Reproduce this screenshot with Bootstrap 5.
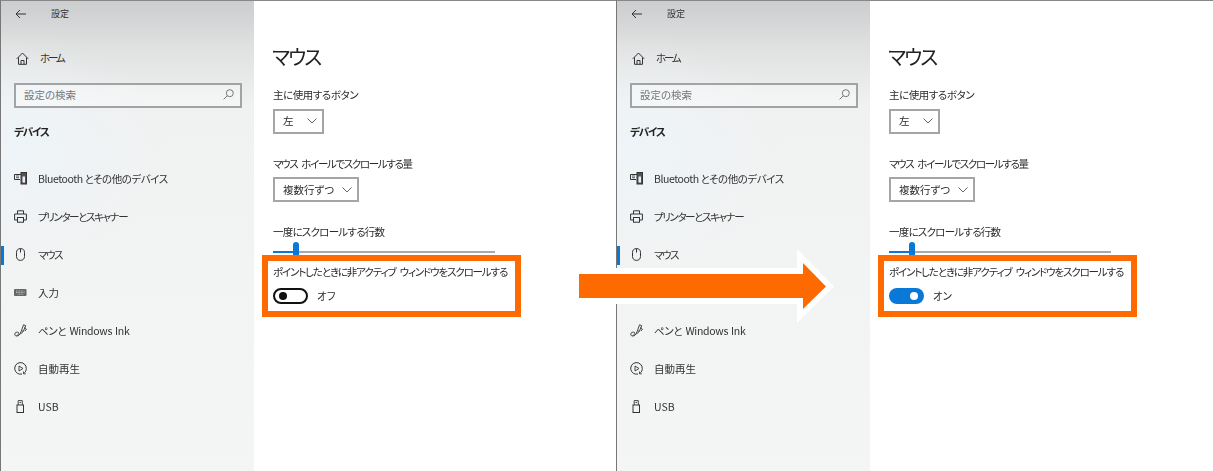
<!DOCTYPE html>
<html lang="ja">
<head>
<meta charset="utf-8">
<title>マウス設定</title>
<link href="https://cdn.jsdelivr.net/npm/bootstrap@5.3.0/dist/css/bootstrap.min.css" rel="stylesheet">
<style>
html,body{width:1213px;height:471px;margin:0;overflow:hidden;background:#fff}
body{font-family:"Noto Sans CJK JP","Noto Sans",sans-serif;font-size:10.5px;color:#333;position:relative;font-feature-settings:"palt"}
.stage{width:1213px;height:471px;filter:blur(.35px)}
.pane{width:616px;height:471px;border-left:1px solid #777;border-top:1px solid #888}
.pane + .pane{width:597px}
.side{width:253px;height:470px;background:radial-gradient(ellipse 170px 120px at 0 150px,#eef4f8 0,rgba(238,244,248,0) 100%),linear-gradient(180deg,#cbcdce 0,#dfe0e0 45px,#f0f1f1 105px,#f4f5f5 100%);flex:none}
.s-top{height:26px;padding-left:14px;gap:24px;font-size:9px}
.s-home{height:40px;margin-top:11px;padding-left:15px;gap:11px;font-size:10.5px}
.s-search{width:228px;height:25px;margin:5px 0 0 13px;border:2px solid #a2a3a4;padding:0 6px 2px 8px;color:#777;font-size:10.5px;background:rgba(255,255,255,.35)}
.s-head{font-weight:700;font-size:10.5px;color:#222;margin:15.5px 0 0 13px;height:36px;line-height:15px;letter-spacing:-1.1px}
.s-row{height:38px;padding-left:13px;gap:12px;font-size:10.5px;position:relative}
.s-row > span{margin-left:-1px}
.s-row svg,.s-home svg{flex:none}
.s-row.on::before{content:"";position:absolute;left:0;top:10px;width:3px;height:19px;background:#0a78d7}
.tight-a{letter-spacing:-.45px}
.tight-pen{letter-spacing:-.3px;word-spacing:1px}
.tight-b{letter-spacing:-.45px}
.tight-c{letter-spacing:-.75px}
.tight-d{letter-spacing:-1.15px;word-spacing:3px}
.tight-g{letter-spacing:-1.35px;word-spacing:3px}
.tight-e{letter-spacing:-1.4px}
.tight-f{letter-spacing:-2.2px}
.main{padding:40px 0 0 19px;color:#2b2b2b;width:262px}
.m-title{font-size:20px;line-height:32px;font-weight:400;margin:0 0 15px -1px;color:#222;letter-spacing:-1.8px}
.m-label{font-size:10.5px;line-height:13px;white-space:nowrap}
.m-select{height:25px;border:2px solid #a5a5a5;margin:7.5px 0 23px;padding:0 5px 0 8px;gap:8px;font-size:10.5px;width:fit-content}
.m-select.wide-gap{gap:13px}
.track{width:222px;height:2px;background:#a9a9a9;margin-top:12.5px;position:relative}
.track::before{content:"";position:absolute;left:0;top:0;width:22px;height:2px;background:#0a78d7}
.thumb{position:absolute;left:20px;top:-9px;width:6px;height:19px;border-radius:3px;background:#0a78d7}
.m-label.inact{margin-top:12.5px}
.tog-row{margin-top:9.5px;gap:9px;font-size:10.5px;height:16px}
.tog{width:35px;height:16px;border-radius:8px;position:relative;flex:none}
.tog-off{border:2px solid #111;background:#fff}
.tog-off::after{content:"";position:absolute;left:4px;top:2px;width:8px;height:8px;border-radius:50%;background:#111}
.tog-on{background:#0a78d7}
.tog-on::after{content:"";position:absolute;right:6px;top:4px;width:8px;height:8px;border-radius:50%;background:#fff}
.hl{position:absolute;top:255px;width:259px;height:62px;border:6px solid #ff6a00}
.hl-a{left:262px}
.hl-b{left:878px}
.arrow{position:absolute;left:579px;top:249px}
</style>
</head>
<body>
<div class="stage d-flex">
  <section class="pane d-flex">
    <aside class="side">
      <div class="s-top d-flex align-items-center"><svg width="12" height="10" viewBox="0 0 12 10" fill="none" stroke="#333"><path d="M11 5H1M5 1 1 5l4 4"/></svg><span>設定</span></div>
      <div class="s-home d-flex align-items-center"><svg width="13" height="13" viewBox="0 0 13 13" fill="none" stroke="#333"><path d="M.8 6.800 6.500 1l5.700 5.800M2.500 5.500v6.800h8V5.500M5 12.300V8.500h3v3.800"/></svg><span class="tight-f">ホーム</span></div>
      <div class="s-search d-flex align-items-center justify-content-between"><span>設定の検索</span><svg width="11" height="11" viewBox="0 0 11 11" fill="none" stroke="#777"><circle cx="6.800" cy="4.200" r="3.500"/><path d="M4.200 6.800.6 10.400"/></svg></div>
      <div class="s-head">デバイス</div>
      <div class="s-row d-flex align-items-center"><svg width="13" height="13" viewBox="0 0 13 13" fill="none" stroke="#333"><path d="M7 2.500H.5v5H6"/><path d="M2 4h3M2 5.700h3" stroke-width=".8"/><rect x="7" y=".5" width="5.500" height="11.500" fill="#555"/><rect x="8.500" y="4.500" width="2.500" height="6" fill="#eee" stroke="none"/></svg><span class="tight-a">Bluetooth とその他のデバイス</span></div>
      <div class="s-row d-flex align-items-center"><svg width="13" height="13" viewBox="0 0 13 13" fill="none" stroke="#333"><path d="M3.500 4V.8h6V4M3 10H.6V4h11.800v6H10"/><rect x="3.500" y="7.500" width="6" height="4.700"/></svg><span class="tight-e">プリンターとスキャナー</span></div>
      <div class="s-row on d-flex align-items-center"><svg width="13" height="13" viewBox="0 0 13 13" fill="none" stroke="#333"><path d="M6.500.6c2.600 0 4 1.500 4 3.800v4c0 2.400-1.600 4-4 4s-4-1.600-4-4v-4C2.500 2.100 3.900.6 6.500.6zM6.500.6v4"/></svg><span class="tight-e">マウス</span></div>
      <div class="s-row d-flex align-items-center"><svg width="13" height="13" viewBox="0 0 13 13"><rect x="0" y="3" width="12.500" height="7" rx="1" fill="#666"/><path d="M2 5h8.500M2 6.500h8.500M3.500 8.200h6" stroke="#ddd" stroke-width=".7" stroke-dasharray="1 .6"/></svg><span>入力</span></div>
      <div class="s-row d-flex align-items-center"><svg width="13" height="13" viewBox="0 0 13 13" fill="none" stroke="#333" stroke-width=".9"><path d="M7.500 6.500 9.500.8l2.200.9L9.300 7.400M7.500 6.500l-1.300 3 .6.300L9.300 7.400z"/><path d="M10.500 3.500 12.400 5 11 7"/><path d="M6.200 9.500C5 12.500 1 13 .7 10.300.5 8.500 3.500 7.500 4.500 8.500c.8.900-.6 3-2 3"/></svg><span class="tight-pen">ペンと Windows Ink</span></div>
      <div class="s-row d-flex align-items-center"><svg width="13" height="13" viewBox="0 0 13 13" fill="none" stroke="#333"><path d="M8 12A5.800 5.800 0 1 1 12.300 6.500c0 1.800-.7 3.200-1.800 4.300"/><path d="M5 4v5l4-2.500zM9.500 9.500v2.300h2.300" stroke-width=".9"/></svg><span>自動再生</span></div>
      <div class="s-row d-flex align-items-center"><svg width="13" height="13" viewBox="0 0 13 13" fill="none" stroke="#333"><rect x="3" y="5" width="6.500" height="7.500"/><path d="M4.200 5V.6h4.100V5M5.500 2.500h1.500" stroke-width=".9"/></svg><span>USB</span></div>
    </aside>
    <main class="main">
      <h1 class="m-title">マウス</h1>
      <div class="m-label tight-b">主に使用するボタン</div>
      <div class="m-select wide-gap d-flex align-items-center"><span>左</span><svg width="10" height="6" viewBox="0 0 10 6" fill="none" stroke="#666"><path d="M.5.5 5 5 9.500.5"/></svg></div>
      <div class="m-label tight-g">マウス ホイールでスクロールする量</div>
      <div class="m-select d-flex align-items-center"><span>複数行ずつ</span><svg width="10" height="6" viewBox="0 0 10 6" fill="none" stroke="#666"><path d="M.5.5 5 5 9.500.5"/></svg></div>
      <div class="m-label tight-c">一度にスクロールする行数</div>
      <div class="track"><div class="thumb"></div></div>
      <div class="m-label inact tight-d">ポイントしたときに非アクティブ ウィンドウをスクロールする</div>
      <div class="tog-row d-flex align-items-center"><div class="tog tog-off"></div><span>オフ</span></div>
    </main>
  </section>
  <section class="pane d-flex">
    <aside class="side">
      <div class="s-top d-flex align-items-center"><svg width="12" height="10" viewBox="0 0 12 10" fill="none" stroke="#333"><path d="M11 5H1M5 1 1 5l4 4"/></svg><span>設定</span></div>
      <div class="s-home d-flex align-items-center"><svg width="13" height="13" viewBox="0 0 13 13" fill="none" stroke="#333"><path d="M.8 6.800 6.500 1l5.700 5.800M2.500 5.500v6.800h8V5.500M5 12.300V8.500h3v3.800"/></svg><span class="tight-f">ホーム</span></div>
      <div class="s-search d-flex align-items-center justify-content-between"><span>設定の検索</span><svg width="11" height="11" viewBox="0 0 11 11" fill="none" stroke="#777"><circle cx="6.800" cy="4.200" r="3.500"/><path d="M4.200 6.800.6 10.400"/></svg></div>
      <div class="s-head">デバイス</div>
      <div class="s-row d-flex align-items-center"><svg width="13" height="13" viewBox="0 0 13 13" fill="none" stroke="#333"><path d="M7 2.500H.5v5H6"/><path d="M2 4h3M2 5.700h3" stroke-width=".8"/><rect x="7" y=".5" width="5.500" height="11.500" fill="#555"/><rect x="8.500" y="4.500" width="2.500" height="6" fill="#eee" stroke="none"/></svg><span class="tight-a">Bluetooth とその他のデバイス</span></div>
      <div class="s-row d-flex align-items-center"><svg width="13" height="13" viewBox="0 0 13 13" fill="none" stroke="#333"><path d="M3.500 4V.8h6V4M3 10H.6V4h11.800v6H10"/><rect x="3.500" y="7.500" width="6" height="4.700"/></svg><span class="tight-e">プリンターとスキャナー</span></div>
      <div class="s-row on d-flex align-items-center"><svg width="13" height="13" viewBox="0 0 13 13" fill="none" stroke="#333"><path d="M6.500.6c2.600 0 4 1.500 4 3.800v4c0 2.400-1.600 4-4 4s-4-1.600-4-4v-4C2.500 2.100 3.900.6 6.500.6zM6.500.6v4"/></svg><span class="tight-e">マウス</span></div>
      <div class="s-row d-flex align-items-center"><svg width="13" height="13" viewBox="0 0 13 13"><rect x="0" y="3" width="12.500" height="7" rx="1" fill="#666"/><path d="M2 5h8.500M2 6.500h8.500M3.500 8.200h6" stroke="#ddd" stroke-width=".7" stroke-dasharray="1 .6"/></svg><span>入力</span></div>
      <div class="s-row d-flex align-items-center"><svg width="13" height="13" viewBox="0 0 13 13" fill="none" stroke="#333" stroke-width=".9"><path d="M7.500 6.500 9.500.8l2.200.9L9.300 7.400M7.500 6.500l-1.300 3 .6.300L9.300 7.400z"/><path d="M10.500 3.500 12.400 5 11 7"/><path d="M6.200 9.500C5 12.500 1 13 .7 10.300.5 8.500 3.500 7.500 4.500 8.500c.8.900-.6 3-2 3"/></svg><span class="tight-pen">ペンと Windows Ink</span></div>
      <div class="s-row d-flex align-items-center"><svg width="13" height="13" viewBox="0 0 13 13" fill="none" stroke="#333"><path d="M8 12A5.800 5.800 0 1 1 12.300 6.500c0 1.800-.7 3.200-1.800 4.300"/><path d="M5 4v5l4-2.500zM9.500 9.500v2.300h2.300" stroke-width=".9"/></svg><span>自動再生</span></div>
      <div class="s-row d-flex align-items-center"><svg width="13" height="13" viewBox="0 0 13 13" fill="none" stroke="#333"><rect x="3" y="5" width="6.500" height="7.500"/><path d="M4.200 5V.6h4.100V5M5.500 2.500h1.500" stroke-width=".9"/></svg><span>USB</span></div>
    </aside>
    <main class="main">
      <h1 class="m-title">マウス</h1>
      <div class="m-label tight-b">主に使用するボタン</div>
      <div class="m-select wide-gap d-flex align-items-center"><span>左</span><svg width="10" height="6" viewBox="0 0 10 6" fill="none" stroke="#666"><path d="M.5.5 5 5 9.500.5"/></svg></div>
      <div class="m-label tight-g">マウス ホイールでスクロールする量</div>
      <div class="m-select d-flex align-items-center"><span>複数行ずつ</span><svg width="10" height="6" viewBox="0 0 10 6" fill="none" stroke="#666"><path d="M.5.5 5 5 9.500.5"/></svg></div>
      <div class="m-label tight-c">一度にスクロールする行数</div>
      <div class="track"><div class="thumb"></div></div>
      <div class="m-label inact tight-d">ポイントしたときに非アクティブ ウィンドウをスクロールする</div>
      <div class="tog-row d-flex align-items-center"><div class="tog tog-on"></div><span>オン</span></div>
    </main>
  </section>
</div>
<div class="hl hl-a"></div>
<div class="hl hl-b"></div>
<svg class="arrow" width="256" height="75" viewBox="0 0 256 75"><polygon points="0,19 218,19 218,0 255,37.500 218,74 218,55 0,55" fill="#fff"/><polygon points="0,25 224,25 224,14 247,37.500 224,60 224,49 0,49" fill="#ff6a00"/></svg>
<script src="https://cdn.jsdelivr.net/npm/bootstrap@5.3.0/dist/js/bootstrap.bundle.min.js"></script>
</body>
</html>
